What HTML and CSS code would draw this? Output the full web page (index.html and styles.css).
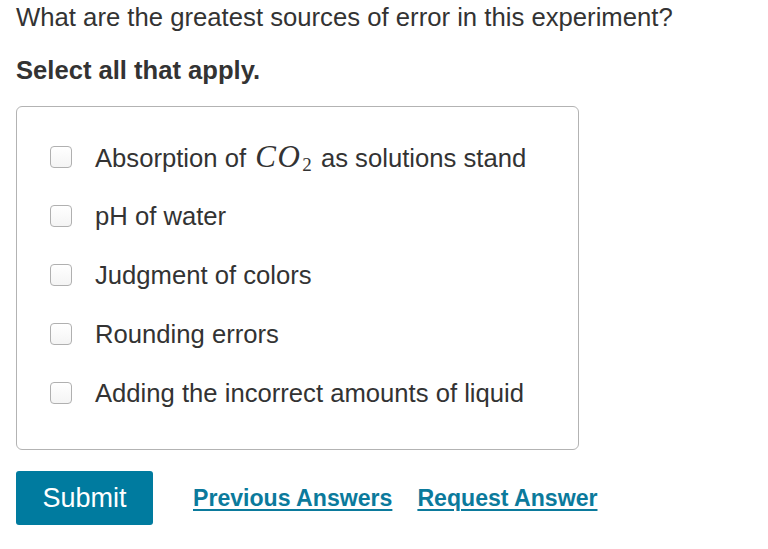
FILE: index.html
```html
<!DOCTYPE html>
<html>
<head>
<meta charset="utf-8">
<link rel="stylesheet" href="styles.css">
</head>
<body>
<div class="page">
  <p class="question">What are the greatest sources of error in this experiment?</p>
  <p class="instr">Select all that apply.</p>
  <div class="box">
    <label class="opt"><span class="cb"></span><span class="txt">Absorption of <span class="math"><i>CO</i><sub>2</sub></span> as solutions stand</span></label>
    <label class="opt"><span class="cb"></span><span class="txt">pH of water</span></label>
    <label class="opt"><span class="cb"></span><span class="txt">Judgment of colors</span></label>
    <label class="opt"><span class="cb"></span><span class="txt">Rounding errors</span></label>
    <label class="opt"><span class="cb"></span><span class="txt">Adding the incorrect amounts of liquid</span></label>
  </div>
  <div class="actions">
    <button class="submit">Submit</button>
    <a class="link" href="#">Previous Answers</a>
    <a class="link" href="#">Request Answer</a>
  </div>
</div>
</body>
</html>
```
FILE: styles.css
```css
html, body { margin: 0; padding: 0; background: #fff; }
body { font-family: "Liberation Sans", Arial, sans-serif; color: #333; }
.page { padding: 2px 16px 0 16px; }
.question { margin: 0; font-size: 25.7px; line-height: 30px; white-space: nowrap; }
.instr { margin: 23px 0 0 0; font-size: 25.6px; font-weight: bold; line-height: 30px; }
.box {
  margin-top: 21px;
  width: 563px;
  height: 344px;
  box-sizing: border-box;
  border: 1px solid #b3b3b3;
  border-radius: 6px;
  padding: 35px 0 0 33px;
  display: flex;
  flex-direction: column;
  gap: 29px;
}
.opt { display: flex; align-items: center; height: 30px; }
.cb {
  width: 22px; height: 22px;
  box-sizing: border-box;
  border: 1.5px solid #b0b0b0;
  border-radius: 4px;
  background: linear-gradient(#fff, #f4f4f4);
  margin-right: 23px;
  flex: none;
}
.txt { font-size: 25.65px; line-height: 30px; color: #333; white-space: nowrap; }
.math { margin-left: 2px; }
.math i { font-family: "Liberation Serif", "DejaVu Serif", serif; font-size: 31px; letter-spacing: 1.5px; }
.math sub { font-family: "Liberation Serif", serif; font-size: 19px; vertical-align: -4px; line-height: 0; margin-left: 1px; margin-right: 2px; }
.actions { display: flex; align-items: center; margin-top: 21px; }
.submit {
  width: 137px; height: 54px;
  background: #007b9f;
  color: #fff;
  border: none;
  border-radius: 3px;
  font-family: "Liberation Sans", Arial, sans-serif;
  font-size: 27px;
  padding: 0;
  margin-right: 40px;
}
.link {
  color: #0b7a9c;
  font-weight: bold;
  font-size: 23.1px;
  text-decoration: underline;
  text-decoration-thickness: 2px;
  text-underline-offset: 3px;
  margin-right: 25px;
}
```
